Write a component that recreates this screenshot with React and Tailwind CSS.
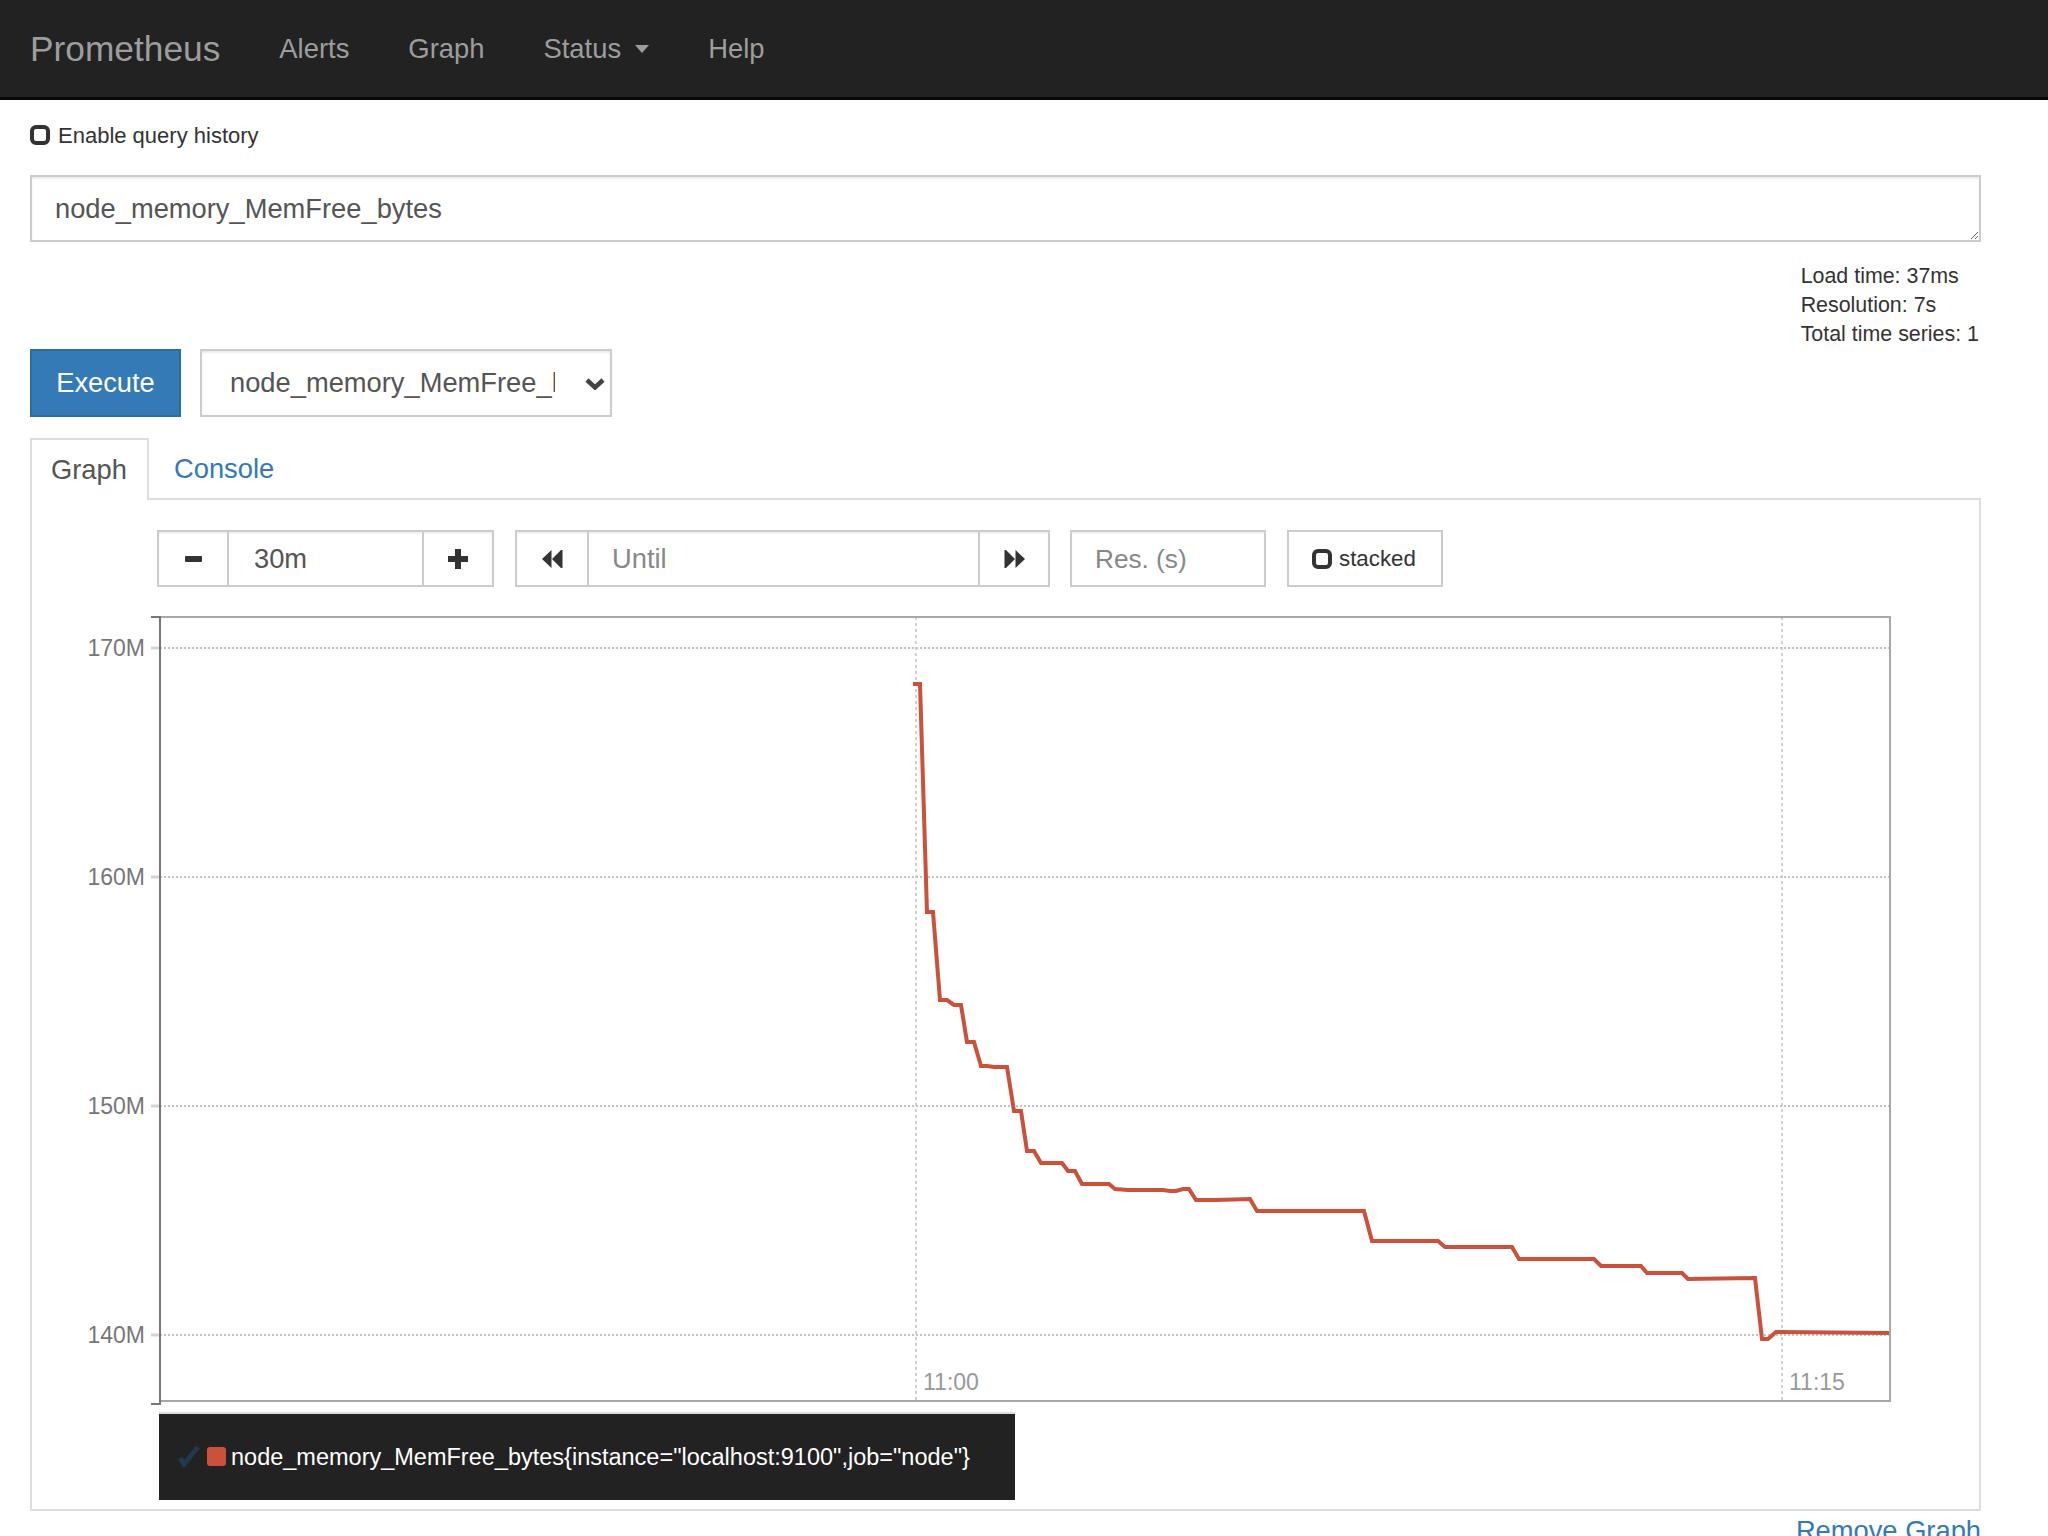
import React from "react";

const linePoints = [
  [913, 684], [920, 684], [927, 912], [933, 912], [940, 1000], [947, 1000], [954, 1005], [961, 1005],
  [967, 1042], [974, 1042], [981, 1066], [987, 1066], [994, 1067], [1007, 1067], [1014, 1111], [1021, 1111],
  [1027, 1151], [1034, 1151], [1041, 1163], [1062, 1163], [1068, 1171], [1075, 1171], [1082, 1184], [1109, 1184],
  [1115, 1189], [1128, 1190], [1163, 1190], [1170, 1191], [1176, 1191], [1183, 1189], [1189, 1189], [1196, 1200],
  [1216, 1200], [1250, 1199], [1257, 1211], [1364, 1211], [1372, 1241], [1438, 1241], [1445, 1247], [1512, 1247],
  [1519, 1259], [1594, 1259], [1601, 1266], [1641, 1266], [1647, 1273], [1682, 1273], [1688, 1279], [1755, 1278],
  [1762, 1339], [1768, 1339], [1776, 1332], [1889, 1333],
];

const yTicks = [
  { y: 648, label: "170M" },
  { y: 877, label: "160M" },
  { y: 1106, label: "150M" },
  { y: 1335, label: "140M" },
];

const xTicks = [
  { x: 916, label: "11:00" },
  { x: 1782, label: "11:15" },
];

const navLinks = ["Alerts", "Graph"];

const Chart = () => {
  return (
    <svg viewBox="32 600 1880 812" className="block w-[1880px] h-[812px] mt-[13px]">
      {/* grid */}
      {yTicks.map((t) => (
        <g key={t.y}>
          <line x1="151" x2="160" y1={t.y} y2={t.y} stroke="#d4d4d4" strokeWidth="3" />
          <line x1="160" x2="1890" y1={t.y} y2={t.y} stroke="#c4c4c4" strokeWidth="2" strokeDasharray="2 2" />
          <text x="145" y={t.y + 8} textAnchor="end" fontSize="23" fill="#777">{t.label}</text>
        </g>
      ))}
      {xTicks.map((t) => (
        <g key={t.x}>
          <line x1={t.x} x2={t.x} y1="617" y2="1401" stroke="#c4c4c4" strokeWidth="1.5" strokeDasharray="3 3" />
          <text x={t.x + 7} y="1390" fontSize="23" fill="#999">{t.label}</text>
        </g>
      ))}

      {/* frame */}
      <path d="M160 617H1890V1401H160" fill="none" stroke="#a8a8a8" strokeWidth="2" />
      <path d="M151 617H160V1404H151" fill="none" stroke="#777" strokeWidth="2" />

      {/* series */}
      <polyline
        points={linePoints.map((p) => p.join(",")).join(" ")}
        fill="none"
        stroke="#cb513a"
        strokeWidth="4"
        strokeLinejoin="miter"
      />
    </svg>
  );
};

const App = () => {
  return (
    <div className="h-[1536px] overflow-hidden bg-white font-['Liberation_Sans',Arial,sans-serif] text-[#333]">

      {/* NAVBAR */}
      <nav className="h-[100px] pt-[1px] bg-[#222] border-b-[3px] border-[#080808] flex items-center gap-[59px] pl-[30px] text-[27.4px] text-[#9d9d9d]">
        <span className="text-[35.3px]">Prometheus</span>
        {navLinks.map((l) => (
          <span key={l}>{l}</span>
        ))}
        <span className="flex items-center gap-[14px]">
          Status
          <span className="w-0 h-0 border-x-[7px] border-t-[8px] border-x-transparent border-t-[#9d9d9d]" />
        </span>
        <span>Help</span>
      </nav>

      <main className="px-[30px] w-[1981px] box-content">
        <label className="flex items-center gap-[8px] h-[24px] mt-[23px] mb-[28px] text-[22px]">
          <input type="checkbox" className="appearance-none w-[20px] h-[20px] border-4 border-[#333] rounded-[6px]" />
          Enable query history
        </label>

        <textarea
          defaultValue="node_memory_MemFree_bytes"
          className="block w-[1951px] h-[67px] px-[23px] py-[13px] border-2 border-[#ccc] text-[27.3px] leading-[38px] text-[#555] shadow-[inset_0_2px_2px_rgba(0,0,0,0.08)]"
        />

        <div className="flex justify-end w-[1951px] pr-[2px] mt-[20px] text-[21.4px] leading-[29px]">
          <div>
            <div>Load time: 37ms</div>
            <div>Resolution: 7s</div>
            <div>Total time series: 1</div>
          </div>
        </div>

        <div className="flex gap-[19px] h-[68px]">
          <button className="w-[151px] pt-[1px] bg-[#337ab7] border-2 border-[#2e6da4] text-white text-[27.3px]">
            Execute
          </button>
          <div className="relative w-[412px]">
            <select className="appearance-none w-full h-full pl-[28px] pr-[55px] border-2 border-[#ccc] text-[27.3px] text-[#555] shadow-[inset_0_2px_2px_rgba(0,0,0,0.08)]">
              <option>node_memory_MemFree_bytes</option>
            </select>
            <svg width="20" height="12" viewBox="0 0 20 12" className="absolute right-[7px] top-[29px]">
              <path d="M2 2l8 7.5L18 2" fill="none" stroke="#444" strokeWidth="4.5" />
            </svg>
          </div>
        </div>

        {/* TABS */}
        <div className="w-[1951px] h-[62px] mt-[21px] flex border-b-2 border-[#ddd] text-[27.3px]">
          <div className="w-[119px] h-[62px] pl-[19px] pt-[1px] bg-white border-2 border-b-0 border-[#ddd] flex items-center text-[#555]">
            Graph
          </div>
          <div className="ml-[25px] pt-[3px] flex items-center text-[#337ab7]">Console</div>
        </div>

        {/* GRAPH PANEL */}
        <section className="w-[1951px] border-x-2 border-b-2 border-[#ddd] pt-[30px] pb-[9px]">
          <div className="flex h-[57px] ml-[125px] text-[27.3px] text-[#555]">
            <div className="flex w-[337px] border-2 border-[#ccc] shadow-[inset_0_2px_2px_rgba(0,0,0,0.06)]">
              <button className="w-[70px] flex items-center justify-center border-r-2 border-[#ccc]">
                <svg width="17" height="6" viewBox="0 0 17 6"><rect width="17" height="6" rx="1" fill="#333" /></svg>
              </button>
              <input defaultValue="30m" className="w-[193px] pl-[25px] pt-[2px]" />
              <button className="flex-1 flex items-center justify-center border-l-2 border-[#ccc]">
                <svg width="20" height="20" viewBox="0 0 20 20"><path d="M7 0h6v7h7v6h-7v7H7v-7H0V7h7z" fill="#333" /></svg>
              </button>
            </div>
            <div className="flex w-[535px] ml-[21px] border-2 border-[#ccc] shadow-[inset_0_2px_2px_rgba(0,0,0,0.06)]">
              <button className="w-[72px] flex items-center justify-center border-r-2 border-[#ccc]">
                <svg width="21" height="20" viewBox="0 0 21 20"><path d="M0 10 9.5 1v18zM10 10l9-9v18zM19 1h1.5v18H19z" fill="#333" /></svg>
              </button>
              <input placeholder="Until" className="w-[389px] pl-[23px] pt-[2px] placeholder:text-[#888]" />
              <button className="flex-1 flex items-center justify-center border-l-2 border-[#ccc]">
                <svg width="21" height="20" viewBox="0 0 21 20"><path d="M21 10 11.5 1v18zM11 10 2 1v18zM2 1H.5v18H2z" fill="#333" /></svg>
              </button>
            </div>
            <input
              placeholder="Res. (s)"
              className="w-[196px] ml-[20px] pl-[23px] pt-[2px] text-[26.2px] border-2 border-[#ccc] placeholder:text-[#888] shadow-[inset_0_2px_2px_rgba(0,0,0,0.06)]"
            />
            <label className="w-[156px] ml-[21px] pl-[23px] flex items-center gap-[7px] border-2 border-[#ccc] text-[22.3px] text-[#333]">
              <input type="checkbox" className="appearance-none w-[20px] h-[20px] border-4 border-[#333] rounded-[6px]" />
              stacked
            </label>
          </div>

          <Chart />

          {/* LEGEND */}
          <div className="w-[856px] h-[88px] ml-[127px] pt-[1px] bg-[#222] border-t-2 border-[#ddd] flex items-center pl-[18px] text-[23.5px] text-white">
            <svg width="24" height="22" viewBox="0 0 24 22" className="mr-[6px] mb-[3px]">
              <path d="M3 13l4 6L21 2" fill="none" stroke="#22384f" strokeWidth="5" />
            </svg>
            <span className="w-[19px] h-[19px] mr-[5px] mb-[3px] rounded-[3px] bg-[#cb513a]" />
            <span>{'node_memory_MemFree_bytes{instance="localhost:9100",job="node"}'}</span>
          </div>
        </section>

        <div className="w-[1951px] text-right text-[27.3px] leading-[40px] text-[#337ab7]">Remove Graph</div>
      </main>
    </div>
  );
};

export default App;
